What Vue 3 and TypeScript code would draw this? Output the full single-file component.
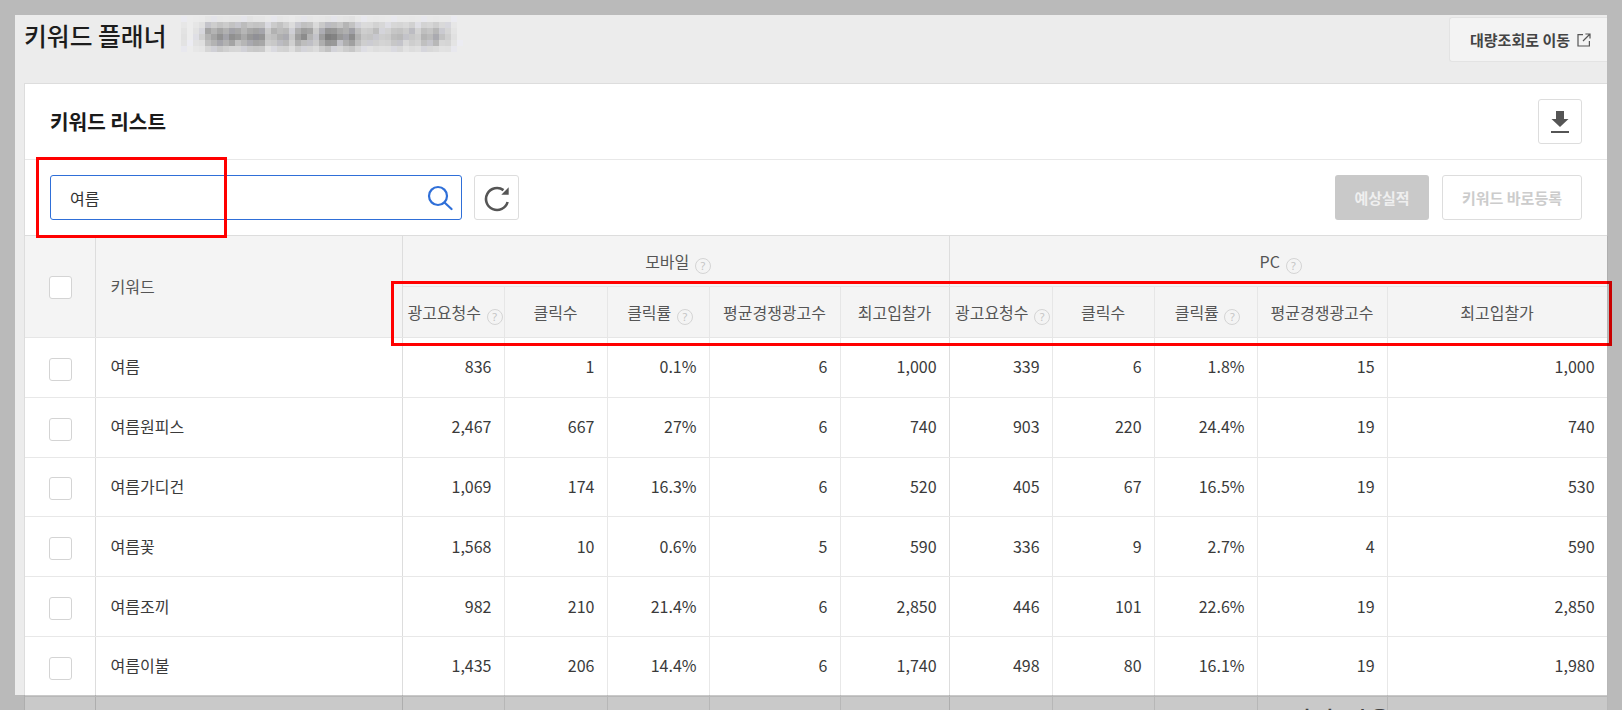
<script setup lang="ts">
type Metric = { label: string; help?: boolean }

const metrics: Metric[] = [
  { label: '광고요청수', help: true },
  { label: '클릭수' },
  { label: '클릭률', help: true },
  { label: '평균경쟁광고수' },
  { label: '최고입찰가' },
]

const rows = [
  ['여름', '836', '1', '0.1%', '6', '1,000', '339', '6', '1.8%', '15', '1,000'],
  ['여름원피스', '2,467', '667', '27%', '6', '740', '903', '220', '24.4%', '19', '740'],
  ['여름가디건', '1,069', '174', '16.3%', '6', '520', '405', '67', '16.5%', '19', '530'],
  ['여름꽃', '1,568', '10', '0.6%', '5', '590', '336', '9', '2.7%', '4', '590'],
  ['여름조끼', '982', '210', '21.4%', '6', '2,850', '446', '101', '22.6%', '19', '2,850'],
  ['여름이불', '1,435', '206', '14.4%', '6', '1,740', '498', '80', '16.1%', '19', '1,980'],
  ['', '', '', '', '', '', '', '', '', '', ''],
]

const colWidths = [70, 307, 102, 103, 102, 131, 109, 103, 102, 103, 130, 220]

// mosaic over the account name, one shade per tile
const columnShade = [1, 0, 1, 2, 6, 7, 8, 6, 7, 6, 7, 8, 8, 7, 3, 5, 6, 6, 3, 6, 7, 6, 4, 7, 9, 8, 6, 8, 9, 5, 3, 3, 4, 3, 3, 4, 4, 3, 4, 3, 5, 4, 5, 3, 3, 1, 0]
const rowShade = [0.08, 0.5, 0.85, 1, 0.75, 0.35]

const tiles = rowShade.flatMap((r, ri) =>
  columnShade.map((c, ci) => {
    const noise = ((ci * 37 + ri * 53) % 17) / 17
    const depth = c * r * (0.75 + noise * 0.45)
    const v = Math.round(236 - depth * 12)
    const tint = (ci + ri) % 5 === 0 ? 6 : 0
    return `rgb(${v},${v},${v + tint})`
  }),
)
</script>

<template>
  <div class="page">
    <header class="top">
      <div class="top-left">
        <h1 class="page-title">키워드 플래너</h1>
        <div class="mosaic" aria-hidden="true">
          <span v-for="(color, i) in tiles" :key="i" :style="{ background: color }"></span>
        </div>
      </div>
      <button class="bulk-btn">
        대량조회로 이동
        <svg width="14" height="14" viewBox="0 0 14 14" fill="none" stroke="#555" stroke-width="1.2">
          <path d="M6 1.6H1v11.4h11.4V8" />
          <path d="M8.4 1h4.6v4.6M13 1 6 8" />
        </svg>
      </button>
    </header>

    <section class="card">
      <div class="card-head">
        <h2 class="card-title">키워드 리스트</h2>
        <button class="icon-btn">
          <svg width="18" height="22" viewBox="0 0 18 22" fill="#555">
            <path d="M5 0h8v8h4.500L9 16 .5 8H5z" />
            <rect x="0" y="20" width="18" height="2" />
          </svg>
        </button>
      </div>

      <div class="toolbar">
        <div class="search">
          <span class="search-text">여름</span>
          <svg width="26" height="26" viewBox="0 0 26 26" fill="none" stroke="#2f6fd8" stroke-width="2.2" stroke-linecap="round">
            <circle cx="11" cy="11" r="9" />
            <path d="M17.500 17.500 24.500 24" />
          </svg>
        </div>
        <button class="icon-btn reset-btn">
          <svg width="28" height="28" viewBox="0 0 28 28" fill="none">
            <path d="M20.500 6.100A11 11 0 1 0 24.600 18" stroke="#555" stroke-width="2.600" />
            <path d="M25.700 3.300v7.400h-7.400z" fill="#555" />
          </svg>
        </button>
        <div class="toolbar-right">
          <button class="btn-disabled">예상실적</button>
          <button class="btn-ghost">키워드 바로등록</button>
        </div>
      </div>

      <table class="grid">
        <colgroup>
          <col v-for="(w, i) in colWidths" :key="i" :style="{ width: w + 'px' }" />
        </colgroup>
        <thead>
          <tr>
            <th rowspan="2" class="check-cell"><span class="checkbox head-box"></span></th>
            <th rowspan="2" class="kw-head">키워드</th>
            <th colspan="5" class="group">모바일 <i class="help">?</i></th>
            <th colspan="5" class="group">PC <i class="help">?</i></th>
          </tr>
          <tr>
            <template v-for="block in 2" :key="block">
              <th
                v-for="m in metrics"
                :key="m.label"
                class="metric"
                :class="{ 'has-help': m.help }"
              >
                {{ m.label }} <i v-if="m.help" class="help">?</i>
              </th>
            </template>
          </tr>
        </thead>
        <tbody>
          <tr v-for="(row, r) in rows" :key="r">
            <td class="check-cell"><span v-if="row[0]" class="checkbox row-box"></span></td>
            <td class="kw-cell">{{ row[0] }}</td>
            <td v-for="(value, c) in row.slice(1)" :key="c" class="num">
              {{ value }}
            </td>
          </tr>
        </tbody>
      </table>
    </section>

    <div class="peek">결과 없음</div>
    <div class="mark mark-search"></div>
    <div class="mark mark-head"></div>
    <div class="dim"></div>
  </div>
</template>

<style scoped>
.page {
  position: relative;
  width: 1622px;
  height: 710px;
  overflow: hidden;
  background: #ececec;
  font-family: 'Noto Sans CJK KR', 'Noto Sans', sans-serif;
  color: #333;
}

.top {
  display: flex;
  justify-content: space-between;
  align-items: flex-start;
  width: 1607px;
  height: 83px;
  padding-left: 24px;
  box-sizing: border-box;
}

.top-left {
  display: flex;
  align-items: flex-start;
}

.page-title {
  margin: 17px 0 0;
  font-size: 24.800px;
  line-height: 36px;
  font-weight: 500;
  color: #1c1c1c;
  white-space: nowrap;
}

.mosaic {
  display: grid;
  grid-template-columns: repeat(47, 6px);
  grid-auto-rows: 6px;
  margin: 16px 0 0 15px;
}

.bulk-btn {
  display: flex;
  align-items: center;
  gap: 7px;
  margin-top: 17px;
  width: 158px;
  height: 45px;
  padding: 0 0 0 20px;
  background: #f3f3f3;
  border: 1px solid #e3e3e3;
  border-right: 0;
  border-radius: 3px 0 0 3px;
  font: 700 15px 'Noto Sans CJK KR', sans-serif;
  color: #444;
  white-space: nowrap;
}

.card {
  width: 1583px;
  margin-left: 24px;
  background: #fff;
  border-top: 1px solid #ddd;
  border-left: 1px solid #ddd;
  box-sizing: border-box;
}

.card-head {
  display: flex;
  justify-content: space-between;
  align-items: center;
  height: 75px;
  padding: 0 25px 0 25px;
  border-bottom: 1px solid #e8e8e8;
}

.card-title {
  margin: 0;
  font-size: 20.200px;
  font-weight: 700;
  color: #1a1a1a;
}

.icon-btn {
  display: flex;
  align-items: center;
  justify-content: center;
  width: 44px;
  height: 45px;
  padding: 0;
  background: #fff;
  border: 1px solid #ddd;
  border-radius: 3px;
}

.reset-btn {
  width: 45px;
}

.toolbar {
  display: flex;
  align-items: center;
  gap: 12px;
  height: 75px;
  padding: 0 25px;
  border-bottom: 1px solid #ddd;
}

.search {
  display: flex;
  align-items: center;
  justify-content: space-between;
  width: 412px;
  height: 45px;
  padding: 0 8px 0 19px;
  box-sizing: border-box;
  border: 1px solid #2f6fd8;
  border-radius: 3px;
}

.search-text {
  font-size: 16px;
  color: #333;
}

.toolbar-right {
  display: flex;
  gap: 13px;
  margin-left: auto;
}

.btn-disabled,
.btn-ghost {
  height: 45px;
  border-radius: 3px;
  font: 700 15px 'Noto Sans CJK KR', sans-serif;
  padding: 0;
}

.btn-disabled {
  width: 94px;
  background: #c9c9c9;
  border: 0;
  color: #efefef;
}

.btn-ghost {
  width: 140px;
  background: #fff;
  border: 1px solid #ddd;
  color: #ccc;
}

.grid {
  width: 1582px;
  table-layout: fixed;
  border-collapse: collapse;
  font-size: 16px;
}

th {
  background: #f4f4f4;
  font-weight: 400;
  color: #555;
  white-space: nowrap;
  padding: 0;
  border-bottom: 1px solid #e6e6e6;
}

.check-cell {
  text-align: center;
  border-right: 1px solid #ddd;
}

.checkbox {
  display: block;
  margin: 0 0 0 24px;
  background: #fff;
  border: 1px solid #d4d4d4;
  border-radius: 3px;
}

.head-box {
  width: 21px;
  height: 21px;
  margin-top: 2px;
}

.row-box {
  width: 21px;
  height: 21px;
  margin-top: 6px;
}

.kw-head {
  text-align: left;
  padding-left: 15px;
  padding-bottom: 2px;
  border-right: 1px solid #ddd;
}

.group {
  height: 50px;
  padding-left: 5px;
  border-right: 1px solid #ddd;
  border-bottom: 1px solid #e6e6e6;
}

.metric {
  height: 50px;
  border-right: 1px solid #e6e6e6;
}

.has-help {
  padding-left: 4px;
}

.help {
  display: inline-block;
  width: 14px;
  height: 14px;
  margin-left: 2px;
  border: 1px solid #d4d4d4;
  border-radius: 50%;
  font: normal 11px/14px 'Noto Sans', sans-serif;
  text-align: center;
  color: #c4c4c4;
  vertical-align: -2px;
}

td {
  height: 56.800px;
  padding: 0 0 2px;
  border-bottom: 1px solid #e8e8e8;
}

.kw-cell {
  padding-left: 15px;
  border-right: 1px solid #ddd;
  color: #3a3a3a;
}

.num {
  padding-right: 12px;
  text-align: right;
  border-right: 1px solid #e8e8e8;
  color: #3a3a3a;
}

.num:nth-child(7),
.metric:nth-child(5) {
  border-right-color: #ddd;
}

.peek {
  position: absolute;
  left: 1289px;
  top: 702px;
  font-size: 24px;
  line-height: 34px;
  font-weight: 500;
  letter-spacing: 2px;
  color: #555;
}

.mark {
  position: absolute;
  border: 3.500px solid #f00;
  box-sizing: border-box;
}

.mark-search {
  left: 36px;
  top: 157px;
  width: 191px;
  height: 81px;
}

.mark-head {
  left: 391px;
  top: 281px;
  width: 1221px;
  height: 65px;
}

.dim {
  position: absolute;
  left: 15px;
  top: 15px;
  width: 1592px;
  height: 680px;
  box-shadow: 0 0 0 2000px rgba(0, 0, 0, 0.21);
  pointer-events: none;
}
</style>

<style>
html,
body {
  margin: 0;
  overflow: hidden;
}
</style>
